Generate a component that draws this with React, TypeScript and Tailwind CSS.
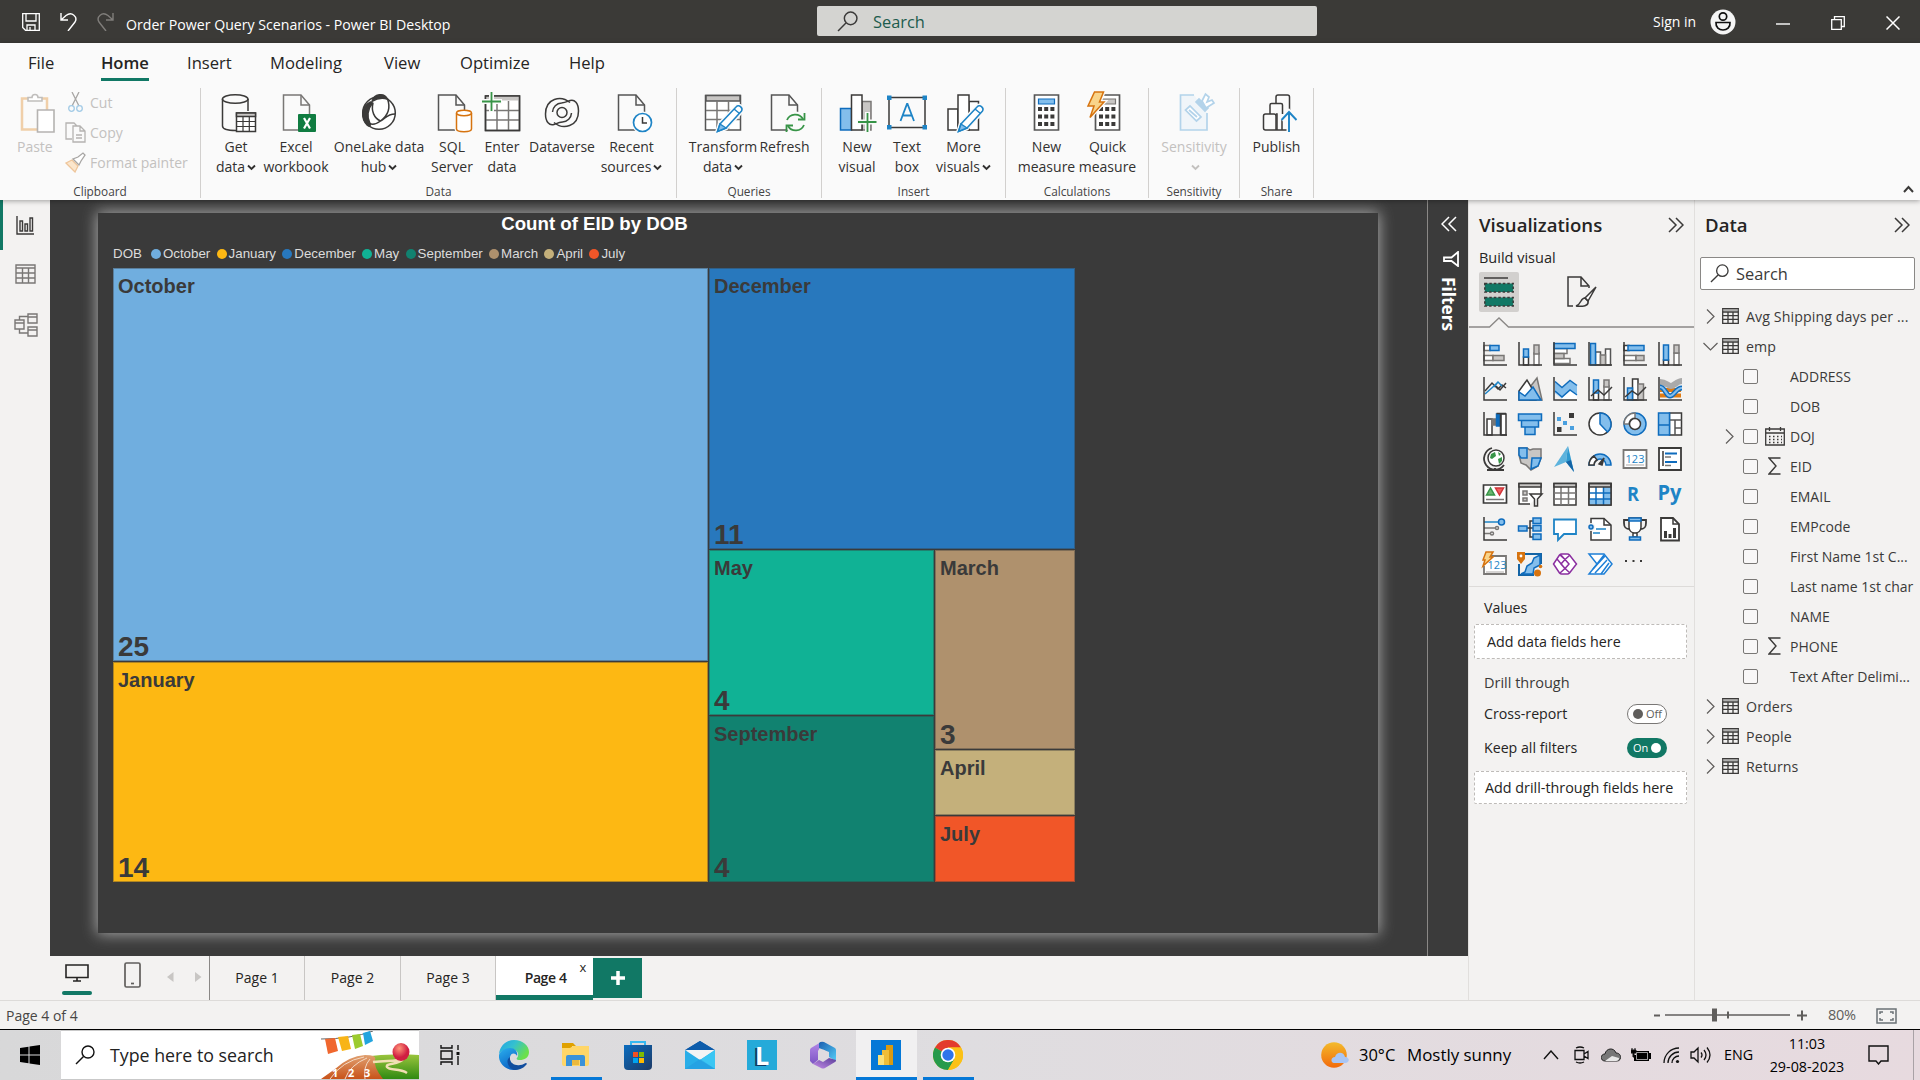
import React from "react";

type Kids = { children?: React.ReactNode };
const K = "#3b3a39";
const B = "#0f6cbd";
const L = "#83beec";
const G = "#797775";
const LG = "#c8c6c4";

/* ---------- ribbon icons (40x40) ---------- */
function RI({ children }: Kids) {
  return (
    <svg width="40" height="40" viewBox="0 0 40 40" fill="none" stroke={K} strokeWidth="1.5" className="block shrink-0 overflow-visible">
      {children}
    </svg>
  );
}
const Doc = ({ x = 6.5, c = "#555" }: { x?: number; c?: string }) => (
  <g transform={`translate(${x - 6.5} 0)`} stroke={c}>
    <path d="M6.5 2H24l8.5 10v25h-26z" fill="#fafafa" />
    <path d="M24 2v10h8.5" />
  </g>
);
const icGet = (
  <RI>
    <path d="M6.500 6v27c0 3 6 4.500 13.500 4.500M32 6v12" />
    <ellipse cx="19.200" cy="6" rx="12.800" ry="4.300" />
    <path d="M20.500 20h19v18.500h-19z" fill="#fff" />
    <path d="M20.500 20h19v3.500h-19z" fill={LG} />
    <path d="M20.500 28.500h19M20.500 33.500h19M27 23.500v15M33.300 23.500v15" strokeWidth="1.200" />
  </RI>
);
const icExcel = (
  <RI>
    <Doc x={7.5} c="#797775" />
    <rect x="22" y="21" width="18" height="18" rx="1" fill="#107c41" stroke="none" />
    <path d="M28 25l6 10.500M34 25l-6 10.500" stroke="#fff" strokeWidth="2.200" />
  </RI>
);
const icLake = (
  <RI>
    <circle cx="20" cy="20" r="16.300" fill="#fff" />
    <path d="M13 8.500C15 1 25-1 28.500 6c-5-1.500-11-.500-15.500 2.500z" fill={K} />
    <path d="M11.500 9C3 13 1 25 8.500 32.500c2 1.500 3.500 0 2.500-2C7.500 24 8.500 16 13.500 10z" fill={K} />
    <path d="M28.500 6c3 8 1 16-7 22-4 3-8 4-11 2.500M14 10c-2 8 1 15 7.500 18M21.500 28c5-2 6-7 14.500-7" />
  </RI>
);
const icSql = (
  <RI>
    <Doc />
    <path d="M24.500 20v16c0 3.500 15 3.500 15 0V20" fill="#fff" stroke="#fafafa" strokeWidth="4" />
    <path d="M24.500 20v16c0 3.500 15 3.500 15 0V20" fill="#fff" stroke="#d6730f" />
    <ellipse cx="32" cy="20" rx="7.500" ry="2.700" fill="#fff" stroke="#d6730f" />
  </RI>
);
const icEnter = (
  <RI>
    <path d="M3.500 3h34v34.500h-34z" fill="#fff" />
    <path d="M4 3h33v4.500H4z" fill={LG} stroke="none" />
    <path d="M3.500 17.500h34M3.500 27h34M15 8v29M26.500 8v29" stroke={G} />
    <path d="M3.500 3h34v34.500h-34z" />
    <path d="M-1 8.500h21M9.500-2v21" stroke="#fafafa" strokeWidth="5" />
    <path d="M0 8.500h19M9.500-1v19" stroke="#379447" strokeWidth="1.800" />
  </RI>
);
const swirl = "M28 9.500C19 2 3.500 5 3.500 21c0 8 4 12 8.500 10.500 3-1 4-2 8.500-2.500a9.500 9.500 0 0 0 9-9";
const icVerse = (
  <RI>
    <path d={swirl} />
    <path d={swirl} transform="rotate(180 20 19.500)" />
    <circle cx="20" cy="19.500" r="5" />
  </RI>
);
const icRecent = (
  <RI>
    <Doc />
    <circle cx="30.500" cy="29.500" r="11" fill="#fafafa" stroke="none" />
    <circle cx="30.500" cy="29.500" r="9" fill="#fff" stroke="#1e84c6" strokeWidth="1.700" />
    <path d="M30.500 24v6H35" />
  </RI>
);
const Pencil = () => (
  <g stroke="#1e84c6">
    <path d="M33.500 13.500c2-2.500 7 1.500 5 4.500L23 35l-8.500 3.500L17 31z" fill="#fff" stroke="#fafafa" strokeWidth="4.500" />
    <path d="M33.500 13.500c2-2.500 7 1.500 5 4.500L23 35l-8.500 3.500L17 31z" fill="#fff" />
    <path d="M17 31l6 4-8.500 3.500z" fill={L} />
    <path d="M31 16l5.500 4.500" />
  </g>
);
const icTransform = (
  <RI>
    <path d="M2.500 2.500h35v34.500h-35z" fill="#fff" stroke="#555" />
    <path d="M3 2.500h34V8H3z" fill={LG} stroke="#555" />
    <path d="M3 17.500h34M3 26.500h34M14 8v29M25.500 8v29" stroke={G} />
    <Pencil />
  </RI>
);
const icRefresh = (
  <RI>
    <Doc />
    <circle cx="30.500" cy="29.500" r="11" fill="#fafafa" stroke="none" />
    <g stroke="#379447" strokeWidth="1.800">
      <path d="M22 27a9 9 0 0 1 16-1M39 32a9 9 0 0 1-16 1" />
      <path d="M39.500 20v6.500H33M21.500 39v-6.500H28" />
    </g>
  </RI>
);
const icNewVisual = (
  <RI>
    <path d="M3.500 15.500h11V37h-11z" fill={L} stroke={B} />
    <path d="M25 8.500h9V37h-9z" fill={LG} stroke={G} />
    <path d="M14.500 2H25v35H14.500z" fill="#fff" />
    <path d="M20 29h21M30.500 19v21" stroke="#fafafa" strokeWidth="5" />
    <path d="M21 29h18.500M30.500 20v19" stroke="#379447" strokeWidth="1.800" />
  </RI>
);
const icText = (
  <RI>
    <path d="M2 4.500h36v30H2z" />
    <g fill="#1e84c6" stroke="none">
      <path d="M0 2.500h4.500V7H0zM35.500 2.500H40V7h-4.500zM0 32h4.500v4.500H0zM35.500 32H40v4.500h-4.500z" />
    </g>
    <path d="M13.500 28L20 11h.5L27 28M15.700 22.500h9" stroke="#1e84c6" strokeWidth="1.800" />
  </RI>
);
const icMore = (
  <RI>
    <path d="M4 16h10v21H4zM25 8.500h9.500V37H25z" fill="#fff" />
    <path d="M14 2h11v35H14z" fill="#fff" />
    <Pencil />
  </RI>
);
const CalcBody = ({ blue }: { blue?: boolean }) => (
  <g>
    <path d="M7.500 2h24v35h-24z" fill="#fff" stroke="#555" strokeWidth="1.700" />
    <path d="M11.500 6h16v5h-16z" fill={blue ? L : LG} stroke={blue ? B : G} strokeWidth="1.200" />
    <g fill={K} stroke="none">
      {[14, 21.5, 29].map((y) => [11, 17.2, 23.4].map((x) => <rect key={`${x}-${y}`} x={x} y={y} width="4" height="4" />))}
    </g>
  </g>
);
const icCalc = <RI><CalcBody blue /></RI>;
const icQuick = (
  <RI>
    <CalcBody />
    <path d="M6.500-1h9L11.500 9H16L2 24.500 6 13H0z" fill="#fafafa" stroke="#fafafa" strokeWidth="4" />
    <path d="M6.500-1h9L11.500 9H16L2 24.500 6 13H0z" fill="#f9d48a" stroke="#d6730f" />
  </RI>
);
const icSens = (
  <RI>
    <g stroke="#b3d3ea" strokeWidth="1.700">
      <path d="M20 2H6.500v35H33V20" fill="#f0f5f9" />
      <path d="M16 13l-4.500 4 11 11 4.500-4z" fill="#fff" />
      <path d="M15 17l8 7" />
      <path d="M22 9l9 9 3-3-9-9z" fill="#b3d3ea" />
      <path d="M28 8l3.500-7 3.500 3-2 5 5-2 2 3-8 5z" fill="#fff" />
    </g>
  </RI>
);
const icPublish = (
  <RI>
    <path d="M13 21v-9q0-1.500 1.500-1.500H24q1.500 0 1.500 1.500v9M19 10V4q0-2 2-2h9.500q2 0 2 2v13M25 37V27M19 37V23q0-2-2-2H8.500q-2 0-2 2v12q0 2 2 2H30" />
    <path d="M20 37V21h-1" />
    <path d="M32 39V19.500M24.500 27l7.500-8 7.500 8" stroke="#fafafa" strokeWidth="5" />
    <path d="M32 39V19.500M24.500 27l7.500-8 7.500 8" stroke="#1e84c6" strokeWidth="1.900" />
  </RI>
);

const Caret = () => (
  <svg width="9" height="7" viewBox="0 0 9 7" className="ml-[2px] inline-block overflow-visible" fill="none" stroke="currentColor" strokeWidth="1.900">
    <path d="M1 1.500l3.500 3.500L8 1.500" />
  </svg>
);

function Btn({ w, icon, a, b, caret, off }: { w: string; icon: React.ReactNode; a: string; b?: string; caret?: boolean; off?: boolean }) {
  return (
    <div className={`${w} flex shrink-0 flex-col items-center whitespace-nowrap pt-[5px] text-[14px] leading-[20px] ${off ? "text-[#c3c1bf]" : "text-[#323130]"}`}>
      {icon}
      <span className="mt-[4px]">{a}</span>
      <span className="flex h-[20px] items-center">
        {b}
        {caret && <Caret />}
      </span>
    </div>
  );
}
function Group({ w, name, children }: { w: string; name: string } & Kids) {
  return (
    <div className={`${w} flex h-[110px] shrink-0 flex-col border-r border-[#d2d0ce]`}>
      <div className="flex h-[94px] shrink-0 justify-center">{children}</div>
      <div className="shrink-0 text-center text-[11.800px] leading-[18px] text-[#444]">{name}</div>
    </div>
  );
}

/* ---------- visual gallery icons (24x24) ---------- */
const Axis = () => <path d="M1 0v23h23" stroke={K} fill="none" />;
const V = ({ children }: Kids) => (
  <svg width="24" height="24" viewBox="0 0 24 24" fill="none" stroke={K} strokeWidth="1.500" className="block overflow-visible">
    {children}
  </svg>
);
const gallery: React.ReactNode[] = [
  <><path d="M1 3.500h6v5H1z" fill="#fff" stroke={G} /><path d="M7 3.500h9v5H7z" fill={L} stroke={B} /><path d="M1 13.500h9v5H1z" fill="#fff" stroke={G} /><path d="M10 13.500h11v5H10z" fill={LG} stroke={G} /><Axis /></>,
  <><path d="M5.500 15h5v8h-5z" fill="#fff" /><path d="M5.500 7h5v8h-5z" fill={L} stroke={B} /><path d="M16 11h5v12h-5z" fill="#fff" stroke={G} /><path d="M16 3h5v9h-5z" fill={LG} stroke={G} /><Axis /></>,
  <><path d="M1 6.500h13v5H1zM1 16.500h16v5H1z" fill="#fff" stroke={G} /><path d="M1 11.500h10v5H1z" fill={LG} stroke={G} /><path d="M1 1.500h21v5H1z" fill={L} stroke={B} /><Axis /></>,
  <><path d="M7.500 10h5v13h-5zM17.500 7h5v16h-5z" fill="#fff" stroke="#555" /><path d="M12.500 13h5v10h-5z" fill={LG} stroke={G} /><path d="M2.500 1.500h5V23h-5z" fill={L} stroke={B} /><Axis /></>,
  <><path d="M1 3.500h5v5H1z" fill="#fff" /><path d="M5 3.500h16v5H5z" fill={L} stroke={B} /><path d="M1 13.500h12v5H1z" fill="#fff" stroke={G} /><path d="M13 13.500h8v5h-8z" fill={LG} stroke={G} /><Axis /></>,
  <><path d="M5.500 18h5v5h-5z" fill="#fff" /><path d="M5.500 3h5v15h-5z" fill={L} stroke={B} /><path d="M16 11h5v12h-5z" fill="#fff" stroke={G} /><path d="M16 3h5v8h-5z" fill={LG} stroke={G} /><Axis /></>,
  <><path d="M2 14l7-8 6 6 4-4 4 3" /><path d="M2 17L11 9l4-4 4 4M15 5l-4 5" stroke="#1e84c6" /><path d="M13 9l4 4 6-7" /><Axis /></>,
  <><path d="M12 23V10l7-9 5 22z" fill={LG} stroke={G} /><path d="M1 23V14L9 3l9 15v5z" fill="#fff" /><path d="M1 23v-8l6 4 8-9 8 13z" fill={L} stroke={B} /></>,
  <><path d="M2 5l7 6 8-7 7 5v13l-8-6-7 6-7-6z" fill={L} stroke="none" /><path d="M2 15l7 7h15v-4l-7-5-8 8z" fill="#fff" stroke="none" /><path d="M2 4.500l7 6 8-7 7 5M2 14l7 6 8-7 7 5" stroke={B} /><Axis /></>,
  <><path d="M5.500 14h5v9h-5z" fill="#fff" /><path d="M5.500 3h5v13h-5z" fill={L} stroke={B} /><path d="M16 9h5v14h-5z" fill="#fff" stroke={G} /><path d="M16 3h5v7h-5z" fill={LG} stroke={G} /><path d="M3 19l7-6 6 5 8-8" /><Axis /></>,
  <><path d="M9.500 2h5.500v21H9.500z" fill="#fff" /><path d="M15 7h5.500v16H15z" fill={LG} stroke={G} /><path d="M4.500 11h5v12h-5z" fill={L} stroke={B} /><path d="M2 20l7-6 6 4 8-8" /><Axis /></>,
  <><path d="M2 18.500h21M2 13h21" stroke="#e07b12" strokeWidth="4" /><path d="M2 5c6 0 8 4 11 4s6-5 11-5" stroke="#aaa" strokeWidth="6" /><path d="M2 10c5 0 6 9 10 9s6-8 12-8" stroke={B} strokeWidth="5" /><path d="M2 10c5 0 6 9 10 9s6-8 12-8" stroke={L} strokeWidth="2.200" /><Axis /></>,
  <><path d="M4 7h5v16H4zM18 2h5v21h-5z" fill="#fff" /><path d="M9 7h4.500v6H9z" fill={G} stroke={G} /><path d="M13.500 2H17v12h-3.500z" fill={B} stroke={B} /><path d="M13.500 1.500H23M17.500 2v21" /><Axis /></>,
  <g fill={L} stroke={B}><path d="M.5 2h23v6.500H.5zM3.500 8.500h17V15h-17zM7 15h10v7.500H7z" /></g>,
  <><g stroke="none"><path d="M16 1h5v5h-5zM4 15h4.500v5H4z" fill={K} /><path d="M4 5h4v4H4zM10 9h4v4h-4zM17 14h4v4h-4z" fill="#4aa0df" /></g><Axis /></>,
  <><circle cx="12" cy="12" r="11" fill="#fff" /><path d="M12 1v11l7.500 8A11 11 0 0 0 12 1z" fill={L} stroke={B} /></>,
  <><circle cx="12" cy="12" r="11" fill={L} stroke={B} /><path d="M1 12A11 11 0 0 1 12 1v5a6 6 0 0 0-6 6z" fill="#fff" stroke={G} /><circle cx="12" cy="12" r="5.500" fill="#fff" /></>,
  <><path d="M11.500 1h12v22h-12z" fill="#fff" /><path d="M11.500 8h12M17 8v15M17 16h6.500" stroke="#555" /><path d="M.5 1h11v12H.5zM.5 13h11v10H.5z" fill={L} stroke={B} /></>,
  <><circle cx="13" cy="11" r="8" fill="#fff" /><path d="M8 7l4-2 1 4-4 3-2-1zM15 12l4-2v4l-3 3zM15 5l3 2-2 2z" fill="#379447" stroke="none" /><path d="M9 1a11 11 0 1 0 12 17M12 21v2M4 23h17" strokeWidth="1.800" /></>,
  <><path d="M1 1h8l3 2 3-1h8v9l-3 8-7 4-5-5-5-2-2-8z" fill={LG} stroke={G} /><path d="M1 1h8v10H3l-2-3zM14 11h9l-3 8-7 3z" fill={L} stroke={B} /></>,
  <g stroke="none"><path d="M15-1L1 20l12-5z" fill="#5db3dd" /><path d="M15-1l6 26-8-10z" fill="#2f9ad0" /><path d="M13 15l8 10-3-12z" fill="#1464a5" /></g>,
  <><path d="M1 18a11 11 0 0 1 22 0h-5a6 6 0 0 0-12 0z" fill={L} stroke={B} /><path d="M1 18a11 11 0 0 1 5-9l3 4a6 6 0 0 0-3 5z" fill="#fff" /><path d="M11 17l5-6-2 7z" fill={K} /></>,
  <><path d="M.5 3h23v18H.5z" fill="#fff" stroke={G} strokeWidth="1.800" /><text x="12" y="15.500" fontSize="11" textAnchor="middle" fill="#1e84c6" stroke="none" fontFamily="Open Sans">123</text><path d="M3 18h18" stroke={LG} /></>,
  <><path d="M1 1h22v22H1z" fill="#fff" strokeWidth="1.800" /><path d="M5 4v15" /><path d="M7 6.500h12M7 15h12" stroke={B} strokeWidth="2" /><path d="M7 10h6M7 18.500h6" stroke={G} /></>,
  <><path d="M.5 3h23v18H.5z" fill="#fff" strokeWidth="1.700" /><path d="M3.500 13l4-7 4 7z" fill="#6bb56f" stroke="#379447" /><path d="M12.500 6h8l-4 7z" fill="#f06060" stroke="#d13438" /><path d="M3 17.500h18" stroke={G} /></>,
  <><path d="M12 22H1V1.500h22V12" fill="#fff" /><path d="M1 1.500h22v3.500H1z" fill={LG} /><path d="M5 9h4v4H5zM5 16h4v3H5z" fill={LG} stroke={G} /><path d="M12 12h12l-4.500 5v7h-3v-7z" fill="#fff" /></>,
  <><path d="M1 1.500h22v21.500H1z" fill="#fff" /><path d="M1 11h22M1 17h22M8 5v18M15.500 5v18" stroke={G} /><path d="M1 1.500h22V5H1z" fill={LG} /></>,
  <><path d="M1 1.500h22v21.500H1z" fill="#fff" /><path d="M15.500 5H23v18H1v-6h14.500z" fill={L} stroke="none" /><path d="M1 11h22M1 17h22M8 5v18M15.500 5v18" stroke={B} /><path d="M1 1.500h22V5H1z" fill={LG} /><path d="M1 1.500h22v21.500H1z" /></>,
  <text x="4" y="19" fontSize="20" fontWeight="700" fill="#1e84c6" stroke="none" fontFamily="Open Sans" textLength="12" lengthAdjust="spacingAndGlyphs">R</text>,
  <text x="-.5" y="17.500" fontSize="21" fontWeight="700" fill="#1e84c6" stroke="none" fontFamily="Open Sans" textLength="24" lengthAdjust="spacingAndGlyphs">Py</text>,
  <><path d="M1 5h15" stroke="#1e84c6" /><circle cx="18.500" cy="5" r="3" fill={L} stroke={B} /><path d="M1 11h12M1 16.500h7" stroke={G} /><circle cx="14" cy="11" r="1.500" fill="#fff" stroke={G} /><circle cx="9" cy="16.500" r="1.500" fill="#fff" stroke={G} /><Axis /></>,
  <><path d="M9 11h3M12 11V4h3M12 11v9h3M12 11h3" /><g fill={L} stroke={B}><path d="M.5 9H9v5H.5zM15 1h8v5.500h-8zM15 8.500h8V14h-8zM15 17h8v5.500h-8z" /></g></>,
  <path d="M1 2.500h22V17H11l-6 6v-6H1z" fill="#fff" stroke="#1e84c6" strokeWidth="1.800" />,
  <><path d="M3 1.500h13l7 6.500v15H3z" fill="#fff" /><path d="M16 1.500V8h7" /><circle cx="3" cy="10" r="4" fill="#f3f2f1" stroke="none" /><circle cx="3" cy="10" r="2" fill={L} stroke={B} /><path d="M8 12h10M5 16h7" stroke="#1e84c6" /></>,
  <><path d="M6 3H1v3c0 5 2 6 6 6M18 3h5v3c0 5-2 6-6 6" strokeWidth="1.800" /><path d="M6 1h12v9c0 4-3 6-6 6s-6-2-6-6zM10 16h4v4h-4z" fill="#fff" /><path d="M6 1h12v3H6zM6.500 20h11v3h-11z" fill={L} stroke={B} /></>,
  <><path d="M3 1h12l6 6v16.500H3z" fill="#fff" strokeWidth="1.800" /><path d="M15 1v6h6" /><path d="M6 14h3v7H6zM10.500 17h3v4h-3zM15 11h3v10h-3z" fill={K} stroke="none" /></>,
  <><path d="M2 4h21v18H1V14" fill="#fff" stroke={G} strokeWidth="1.800" /><text x="14" y="17" fontSize="11" textAnchor="middle" fill="#1e84c6" stroke="none" fontFamily="Open Sans">123</text><path d="M3 20h18" stroke={LG} /><path d="M3 0h7L7 5h3L0 14l2-6h-2z" fill="#f9d48a" stroke="#d6730f" /></>,
  <><path d="M6 2h17v10M1 12v11h15" stroke="#1464a5" strokeWidth="2" /><path d="M3 22h12l1-6 6-3V3l-6 3-2 5-5 3-2 6z" fill={L} stroke={B} /><path d="M-1 0h8v7l-4 5-4-5z" fill="#d6730f" stroke="none" /><circle cx="3" cy="4" r="1.400" fill="#fff" stroke="none" /><circle cx="19.500" cy="21" r="3.500" fill="#d6730f" stroke="none" /><circle cx="22.500" cy="14.500" r="1.800" fill="#d6730f" stroke="none" /></>,
  <g stroke="#8b2fa0" fill="#fff" strokeWidth="1.500"><path d="M8.500 2h6q1 0 2 1l7 9-7 9q-1 1-2 1h-6q-1 0-2-1l-6-9 6-9q1-1 2-1z" /><path d="M7 3l5 4.500 5-4.500M7 21l5-4.500 5 4.500M12 7.500L8 12l4 4.500 4-4.500zM7.500 2.500L12 7.500M12 16.500L4 7" fill="none" /></g>,
  <g stroke="#1e7fd6" fill="#fff"><path d="M1 2h15l8 10-8 10H1l8-10z" /><path d="M9 12L16 3M5 17L17 4M7 21l12-13M13 22l8-11" fill="none" /></g>,
  <g fill={K} stroke="none"><path d="M2 8h2v2H2zM9.500 8h2v2h-2zM17 8h2v2h-2z" /></g>,
];

/* ---------- small shared icons ---------- */
const DblChevron = ({ flip, c = K }: { flip?: boolean; c?: string }) => (
  <svg width="16" height="16" viewBox="0 0 16 16" fill="none" stroke={c} strokeWidth="1.500" className={flip ? "ml-[2px] block -scale-x-100" : "block"}>
    <path d="M1 1l7 7-7 7M8 1l7 7-7 7" />
  </svg>
);
const Mag = ({ s, c = K }: { s: number; c?: string }) => (
  <svg width={s} height={s} viewBox="0 0 20 20" fill="none" stroke={c} strokeWidth="1.400">
    <circle cx="13" cy="7" r="6" />
    <path d="M8.500 11.500L1 19" />
  </svg>
);
const TableIco = () => (
  <svg width="17" height="16" viewBox="0 0 17 16" fill="none" stroke={K} strokeWidth="1.300" className="shrink-0">
    <path d="M.7.700h15.600v14.600H.7zM.7 4h15.600M.7 7.700h15.600M.7 11.400h15.600M6 4v11.300M11 4v11.300" />
    <path d="M.7 2h15.600" stroke="#888" />
  </svg>
);

const fields: { n: string; k?: "date" | "sum" }[] = [
  { n: "ADDRESS" }, { n: "DOB" }, { n: "DOJ", k: "date" }, { n: "EID", k: "sum" }, { n: "EMAIL" }, { n: "EMPcode" },
  { n: "First Name 1st C..." }, { n: "Last name 1st char" }, { n: "NAME" }, { n: "PHONE", k: "sum" }, { n: "Text After Delimi..." },
];
const RightCh = () => (
  <svg width="9" height="15" viewBox="0 0 9 15" fill="none" stroke="#605e5c" strokeWidth="1.200" className="shrink-0"><path d="M1 .5l7 7-7 7" /></svg>
);
function TableRow({ n, open }: { n: string; open?: boolean }) {
  return (
    <div className="flex h-[30px] items-center whitespace-nowrap">
      <div className="flex w-[27px] justify-center pl-[3px]">
        {open ? <svg width="15" height="9" viewBox="0 0 15 9" fill="none" stroke="#605e5c" strokeWidth="1.200"><path d="M.5 1l7 7 7-7" /></svg> : <RightCh />}
      </div>
      <TableIco />
      <span className="ml-[7px] pt-px text-[14.200px] tracking-[0.1px]">{n}</span>
    </div>
  );
}

const legend: [string, string][] = [
  ["October", "bg-[#70aedf]"], ["January", "bg-[#fdb813]"], ["December", "bg-[#2878bd]"], ["May", "bg-[#10b295]"],
  ["September", "bg-[#118270]"], ["March", "bg-[#af916d]"], ["April", "bg-[#c4b07b]"], ["July", "bg-[#f15628]"],
];
function Tile({ c, n, v }: { c: string; n: string; v?: number }) {
  return (
    <div className={`${c} flex min-h-0 flex-col justify-between border border-[#3a3a3a]/40 pl-[4px]`}>
      <span className="pt-[5px] text-[20px] leading-[24px]">{n}</span>
      {v !== undefined && <span className="text-[28px] leading-[26px]">{v}</span>}
    </div>
  );
}

/* ---------- taskbar logos (30x30) ---------- */
const S30 = ({ children }: Kids) => <svg width="30" height="30" viewBox="0 0 30 30" className="block">{children}</svg>;
const Edge = (
  <S30>
    <defs>
      <linearGradient id="e1" x1="0" y1="0" x2="1" y2=".5"><stop offset="0" stopColor="#1fa3e6" /><stop offset=".5" stopColor="#35c1cf" /><stop offset="1" stopColor="#6be04a" /></linearGradient>
      <linearGradient id="e2" x1="0" y1="0" x2=".5" y2="1"><stop offset="0" stopColor="#2bb0ee" /><stop offset="1" stopColor="#0a62c4" /></linearGradient>
    </defs>
    <path d="M0 14C1 5 8 0 15 0c9 0 15 6 15 12 0 6-5 8-9 8-3 0-4-1-3-2 3-4 0-9-6-9-6 0-10 2-12 5z" fill="url(#e1)" />
    <path d="M0 15C1 11 6 8 11 8c6 0 8 5 7 8-1-3-6-4-7 1-1 6 4 11 9 12-11 4-21-5-20-14z" fill="url(#e2)" />
    <path d="M11 17c-1 6 5 9 10 8 3 0 5-2 6-2 1 0 1 1 0 2-3 4-8 5-12 5-6-2-9-10-4-13z" fill="#104d9e" />
  </S30>
);
const Folder = (
  <S30>
    <path d="M2 3h11l3 3h-4v3H2z" fill="#e0a100" /><path d="M2 8h8l3-2h16v18q0 2-2 2H4q-2 0-2-2z" fill="#ffd668" />
    <path d="M6 26V17q0-2 2-2h15q2 0 2 2v9h-5v-6h-8v6z" fill="#3b92d9" /><path d="M12 20h7v5h-7z" fill="#ecb93d" />
  </S30>
);
const Store = (
  <S30>
    <defs><linearGradient id="s1" x1="0" y1="0" x2="1" y2="1"><stop offset="0" stopColor="#0a6cbf" /><stop offset="1" stopColor="#1d3a66" /></linearGradient></defs>
    <path d="M8 6V2h14v4" fill="none" stroke="#35b9f1" strokeWidth="2" /><path d="M1 5h28v21q0 4-4 4H5q-4 0-4-4z" fill="url(#s1)" />
    <path d="M10 12h5v5h-5z" fill="#f25022" /><path d="M16 12h5v5h-5z" fill="#7fba00" /><path d="M10 18h5v5h-5z" fill="#00a4ef" /><path d="M16 18h5v5h-5z" fill="#ffb900" />
  </S30>
);
const Mail = (
  <S30>
    <path d="M0 10L15 1l15 9z" fill="#0f5ba7" /><path d="M2 10h26v10H2z" fill="#f4f4f4" /><path d="M2 9l13-8 13 8v1H2z" fill="#0d5cab" />
    <path d="M0 10l15 10L30 10v19H0z" fill="#29aee8" /><path d="M30 10v19L15 20z" fill="#3bc6f3" /><path d="M0 29h30L15 19z" fill="#2196dd" opacity=".5" />
  </S30>
);
const LApp = (
  <div className="flex h-[30px] w-[30px] items-center justify-center bg-[#25aad9] text-[25px] font-bold leading-none text-white [text-shadow:-2px_1px_0_#123a63]">L</div>
);
const M365 = (
  <S30>
    <defs><linearGradient id="m1" x1="0" y1="0" x2="0" y2="1"><stop offset="0" stopColor="#b388e8" /><stop offset="1" stopColor="#7d55c4" /></linearGradient>
      <linearGradient id="m2" x1="0" y1="0" x2="1" y2="1"><stop offset="0" stopColor="#1b5fb0" /><stop offset="1" stopColor="#54cdf7" /></linearGradient>
      <linearGradient id="m3" x1="0" y1="1" x2="1" y2="0"><stop offset="0" stopColor="#c48be8" /><stop offset="1" stopColor="#5b3f9a" /></linearGradient></defs>
    <path d="M13 2L3 8q-1 1-1 2v11l3 3 5-4v-9l5-9z" fill="url(#m1)" />
    <path d="M11 3q2-2 5-1l11 6q1 1 1 2v11l-7-4v-5l-10-4z" fill="url(#m2)" />
    <path d="M28 20q0 2-1 2l-10 6q-2 1-4 0l-8-4 6-4 4 2 6-4z" fill="url(#m3)" />
    <path d="M15 9.500l5 3v5.500L15 21l-5-3v-5.500z" fill="#dfdce0" />
  </S30>
);
const PBI = (
  <S30>
    <path d="M0 0h30v30H0z" fill="#0578d7" /><path d="M15 5h7v20h-7z" fill="#d99a12" /><path d="M11 10h7v15h-7z" fill="#f0bd38" /><path d="M7 15h6v10H7z" fill="#fbe07a" />
  </S30>
);
const Chrome = (
  <S30>
    <circle cx="15" cy="15" r="15" fill="#fbc116" /><path d="M15 15L2 7.500A15 15 0 0 1 28 7.500H15z" fill="#e33b2e" /><path d="M2 7.500A15 15 0 0 0 15 30l6.500-11.300L15 15z" fill="#269a4b" />
    <path d="M15 7.500h13A15 15 0 0 1 15 30l6.500-11z" fill="#fbc116" /><circle cx="15" cy="15" r="7.300" fill="#fff" /><circle cx="15" cy="15" r="5.700" fill="#2f74ea" />
  </S30>
);
function Task({ w, children, on, line }: { w: string; on?: boolean; line?: boolean } & Kids) {
  return (
    <div className={`${w} flex h-[50px] shrink-0 flex-col items-center justify-between ${on ? "bg-[#f1f0f1]" : ""}`}>
      <div className="pt-[10px]">{children}</div>
      <div className={`h-[3px] ${line ? "w-full bg-[#0578d7]" : ""}`} />
    </div>
  );
}

export default function App() {
  return (
    <div className="flex h-[1080px] w-[1920px] flex-col overflow-hidden bg-[#f3f2f1] font-['Open_Sans','Noto_Sans',sans-serif] text-[#252423]">
      {/* title bar */}
      <header className="flex h-[43px] shrink-0 bg-[#3b3a37] text-[14px] text-white">
        <div className="flex w-[817px] items-center pl-[22px] pt-[2px]">
          <svg width="18" height="18" viewBox="0 0 18 18" fill="none" stroke="#fff" strokeWidth="1.300" className="mb-[2px]"><path d="M.7.700h16.600v16.600H3.500L.7 14.500zM4 1v7h10V1M5 17v-5h8v5M8 14v3" /></svg>
          <svg width="17" height="18" viewBox="0 0 17 18" fill="none" stroke="#fff" strokeWidth="1.400" className="mb-[2px] ml-[20px]"><path d="M1 0v7h7M1 7l5-4.500C12-2 18 4 15 9L8 18" /></svg>
          <svg width="17" height="18" viewBox="0 0 17 18" fill="none" stroke="#807e7b" strokeWidth="1.400" className="mb-[2px] ml-[20px]"><path d="M16 0v7H9M16 7l-5-4.500C5-2-1 4 2 9l7 9" /></svg>
          <span className="ml-[12px] whitespace-nowrap pt-[5px] text-[14.150px]">Order Power Query Scenarios - Power BI Desktop</span>
        </div>
        <div className="mt-[6px] flex h-[30px] w-[500px] items-center rounded-[2px] bg-[#d4d4d1] pl-[20px] text-[16.400px] text-[#1d5c4d]">
          <Mag s={21} /><span className="ml-[15px] pt-[2px]">Search</span>
        </div>
        <div className="flex flex-1 items-center pl-[336px]">
          <span className="w-[57px] whitespace-nowrap">Sign in</span>
          <svg width="26" height="26" viewBox="0 0 26 26" fill="none" stroke="#111" strokeWidth="1.700"><circle cx="13" cy="13" r="12.500" fill="#f5f5f5" stroke="none" /><circle cx="13" cy="7.500" r="3.700" /><path d="M6 13.500h14c1 10-15 10-14 0z" /></svg>
          <svg width="14" height="14" viewBox="0 0 14 14" stroke="#fff" strokeWidth="1.400" className="ml-[40px]"><path d="M0 9h14" /></svg>
          <svg width="14" height="14" viewBox="0 0 14 14" fill="none" stroke="#fff" strokeWidth="1.300" className="ml-[41px] mt-[2px]"><path d="M.7 3.700h9.600v9.600H.7zM3.500 3.500V.7h9.800v9.800h-3" /></svg>
          <svg width="14" height="14" viewBox="0 0 14 14" stroke="#fff" strokeWidth="1.500" className="ml-[41px] mt-[3px]"><path d="M.5.500l13 13M13.500.500l-13 13" /></svg>
        </div>
      </header>

      {/* ribbon */}
      <section className="z-10 flex h-[157px] shrink-0 flex-col bg-[#fafafa] shadow-[0_1px_5px_rgba(0,0,0,.35)]">
        <nav className="flex h-[45px] text-[16.600px] text-[#252423]">
          <div className="ml-[28px] w-[73px] pt-[8px]">File</div>
          <div className="flex w-[48px] flex-col pt-[8px] font-semibold"><span className="tracking-[-0.1px]">Home</span><i className="mt-[2px] h-[3px] bg-[#117865]" /></div>
          <div className="ml-[38px] w-[83px] pt-[8px]">Insert</div>
          <div className="w-[114px] pt-[8px]">Modeling</div>
          <div className="w-[76px] pt-[8px]">View</div>
          <div className="w-[109px] pt-[8px]">Optimize</div>
          <div className="pt-[8px]">Help</div>
        </nav>
        <div className="flex">
          <Group w="w-[201px]" name="Clipboard">
            <div className="flex w-[201px] text-[14px] text-[#c3c1bf]">
              <div className="flex w-[50px] shrink-0 flex-col pl-[17px] pt-[5px]">
                <svg width="40" height="40" viewBox="0 0 40 40" fill="none" strokeWidth="1.600" className="overflow-visible">
                  <path d="M5 5.500h25v31H5z" fill="#fafafa" stroke="#f0cfa9" strokeWidth="2.500" />
                  <path d="M11 8V4.500h4c0-4 6-4 6 0h4V8z" fill="#fff" stroke="#c0bebc" />
                  <path d="M20.500 17H37v22H20.500z" fill="#fff" stroke="#b5b3b1" />
                </svg>
                <span className="mt-[4px] leading-[20px]">Paste</span>
              </div>
              <div className="-mt-px flex flex-col pl-[15px]">
                <div className="flex h-[30px] items-center gap-[4px]">
                  <svg width="21" height="21" viewBox="0 0 21 21" fill="none" stroke="#a8a6a4" strokeWidth="1.300"><path d="M7 0l7 14M14 0L7 14" /><g stroke="#a3cbe6"><circle cx="6.500" cy="16.500" r="2.800" /><circle cx="14.500" cy="16.500" r="2.800" /></g></svg>
                  Cut
                </div>
                <div className="flex h-[30px] items-center gap-[4px]">
                  <svg width="21" height="21" viewBox="0 0 21 21" fill="none" stroke="#b5b3b1" strokeWidth="1.300"><path d="M7 17H1V1h8l3 3M8 4h7l5 5v11H8zM15 4v5h5M11 13h6M11 16h6" /></svg>
                  Copy
                </div>
                <div className="flex h-[30px] items-center gap-[4px] whitespace-nowrap">
                  <svg width="21" height="21" viewBox="0 0 21 21" fill="none" strokeWidth="1.300"><path d="M1 11l6-3 6 6-3 6z" fill="#fbe6cc" stroke="#eec59a" /><path d="M8 7l6 6 2-4 4-6-2-2-5 4z" fill="#fff" stroke="#a8a6a4" /></svg>
                  Format painter
                </div>
              </div>
            </div>
          </Group>
          <Group w="w-[476px]" name="Data">
            <Btn w="w-[56px]" icon={icGet} a="Get" b="data" caret />
            <Btn w="w-[64px]" icon={icExcel} a="Excel" b="workbook" />
            <Btn w="w-[102px]" icon={icLake} a="OneLake data" b="hub" caret />
            <Btn w="w-[44px]" icon={icSql} a="SQL" b="Server" />
            <Btn w="w-[56px]" icon={icEnter} a="Enter" b="data" />
            <Btn w="w-[64px]" icon={icVerse} a="Dataverse" />
            <Btn w="w-[75px]" icon={icRecent} a="Recent" b="sources" caret />
          </Group>
          <Group w="w-[145px]" name="Queries">
            <div className="ml-[6px] flex">
              <Btn w="w-[65px]" icon={icTransform} a="Transform" b="data" caret />
              <Btn w="w-[58px]" icon={icRefresh} a="Refresh" />
            </div>
          </Group>
          <Group w="w-[184px]" name="Insert">
            <Btn w="w-[50px]" icon={icNewVisual} a="New" b="visual" />
            <Btn w="w-[50px]" icon={icText} a="Text" b="box" />
            <Btn w="w-[63px]" icon={icMore} a="More" b="visuals" caret />
          </Group>
          <Group w="w-[143px]" name="Calculations">
            <div className="-ml-px flex">
              <Btn w="w-[62px]" icon={icCalc} a="New" b="measure" />
              <Btn w="w-[60px]" icon={icQuick} a="Quick" b="measure" />
            </div>
          </Group>
          <Group w="w-[91px]" name="Sensitivity"><Btn w="w-[88px]" icon={icSens} a="Sensitivity" caret off /></Group>
          <Group w="w-[74px]" name="Share"><Btn w="w-[72px]" icon={icPublish} a="Publish" /></Group>
          <div className="flex flex-1 items-end justify-end pb-[5px] pr-[6px]">
            <svg width="11" height="8" viewBox="0 0 11 8" fill="none" stroke={K} strokeWidth="2"><path d="M1 7l4.500-5L10 7" /></svg>
          </div>
        </div>
      </section>

      <main className="flex h-[800px] shrink-0">
        <div className="flex w-[1468px] flex-col">
          <div className="flex h-[756px]">
            {/* view switcher */}
            <aside className="flex w-[50px] flex-col">
              <div className="flex h-[50px] items-center border-l-[3px] border-[#117865] pl-[13px]">
                <svg width="18" height="19" viewBox="0 0 18 19" fill="none" stroke={K} strokeWidth="1.400"><path d="M1 0v18h17M4 5h2.500v10H4zM9 8h2.500v7H9zM14 2h2.500v13H14z" /></svg>
              </div>
              <div className="flex h-[50px] items-center pb-[2px] pl-[15px]">
                <svg width="21" height="20" viewBox="0 0 21 20" fill="none" stroke={G} strokeWidth="1.400"><path d="M1 1h19v18H1zM1 4h19M1 9h19M1 14h19M7.500 4v15M13.500 4v15" /></svg>
              </div>
              <div className="flex h-[50px] items-center pb-px pl-[14px]">
                <svg width="24" height="24" viewBox="0 0 24 24" fill="none" stroke={G} strokeWidth="1.400"><path d="M1 7h9v9H1zM14 1h9v9h-9zM14 14h9v9h-9zM1 10h9M14 4h9M14 17h9M5.500 7V3.500H14M5.500 16v4H14" /></svg>
              </div>
            </aside>
            {/* report canvas */}
            <div className="w-[1377px] bg-[#3b3b3b] pl-[48px] pt-[13px]">
              <div className="h-[720px] w-[1280px] bg-[#3a3a3a] pl-[15px] font-['Liberation_Sans',Arial,sans-serif] shadow-[0_0_14px_1px_#a8a8a8]">
                <div className="flex h-[28px] w-[963px] justify-center text-[18.670px] font-bold leading-[21px] text-white">Count of EID by DOB</div>
                <div className="flex h-[27px] items-center pb-px text-[13.330px] text-[#dcdcdc]">
                  <span className="mr-[9px]">DOB</span>
                  {legend.map(([n, c]) => (
                    <span key={n} className="mr-[6.300px] flex items-center"><i className={`${c} mr-[2px] h-[10px] w-[10px] rounded-full`} />{n}</span>
                  ))}
                </div>
                <div className="grid h-[614px] w-[962px] grid-cols-[595px_366px] gap-px font-bold text-[#3a3a3a]">
                  <div className="grid grid-rows-[393px_220px] gap-px">
                    <Tile c="bg-[#70aedf]" n="October" v={25} />
                    <Tile c="bg-[#fdb813]" n="January" v={14} />
                  </div>
                  <div className="grid grid-rows-[281px_332px] gap-px">
                    <Tile c="bg-[#2878bd]" n="December" v={11} />
                    <div className="grid grid-cols-[225px_140px] gap-px">
                      <div className="grid grid-rows-[165px_166px] gap-px">
                        <Tile c="bg-[#10b295]" n="May" v={4} />
                        <Tile c="bg-[#118270]" n="September" v={4} />
                      </div>
                      <div className="grid grid-rows-[199px_65px_66px] gap-px">
                        <Tile c="bg-[#af916d]" n="March" v={3} />
                        <Tile c="bg-[#c4b07b]" n="April" />
                        <Tile c="bg-[#f15628]" n="July" />
                      </div>
                    </div>
                  </div>
                </div>
              </div>
            </div>
            {/* collapsed filters pane */}
            <div className="z-[1] flex w-[41px] flex-col items-center border-l border-[#8a8886] bg-[#3b3b3b] pt-[16px]">
              <DblChevron flip c="#fff" />
              <svg width="16" height="16" viewBox="0 0 16 16" fill="none" stroke="#fff" strokeWidth="1.800" className="ml-[6px] mt-[19px]"><path d="M15 1v14L8.500 10H1V6.500h7.500z" /></svg>
              <span className="-ml-px mt-[10px] text-[17.300px] font-bold leading-[18px] text-white [writing-mode:vertical-rl]">Filters</span>
            </div>
          </div>
          {/* page tabs */}
          <div className="flex h-[44px] text-[14px]">
            <div className="ml-[62px] flex w-[30px] flex-col items-center pt-[8px]">
              <svg width="24" height="18" viewBox="0 0 24 18" fill="none" stroke="#252423" strokeWidth="1.600"><path d="M1 1h22v12.500H1zM12 13.500V17M8 17h8" /></svg>
              <i className="mt-[9px] h-[4px] w-[30px] rounded-full bg-[#117865]" />
            </div>
            <svg width="17" height="26" viewBox="0 0 17 26" fill="none" stroke="#605e5c" strokeWidth="1.700" className="ml-[32px] mt-[6px]"><rect x="1" y="1" width="15" height="24" rx="1.500" /><path d="M7 21.500h3" /></svg>
            <div className="flex w-[68px] items-center justify-between pb-[2px] pl-[26px] pr-[7px]">
              <svg width="7" height="10" viewBox="0 0 7 10" fill="#c8c6c4"><path d="M6.500 0v10L0 5z" /></svg>
              <svg width="7" height="10" viewBox="0 0 7 10" fill="#c8c6c4"><path d="M0 0v10l6.500-5z" /></svg>
            </div>
            <div className="flex w-[96px] items-center justify-center border-x border-x-[#c8c6c4] border-l-[#8a8886] pb-[2px]">Page 1</div>
            <div className="flex w-[96px] items-center justify-center border-r border-[#c8c6c4] pb-[2px]">Page 2</div>
            <div className="flex w-[95px] items-center justify-center border-r border-[#c8c6c4] pb-[2px]">Page 3</div>
            <div className="flex w-[97px] justify-center border-b-[5px] border-[#117865] bg-white pl-[22px] font-semibold">
              <span className="whitespace-nowrap pt-[11px] tracking-[-0.4px]">Page 4</span>
              <span className="ml-[13px] pt-[2px] text-[13px] font-normal">x</span>
            </div>
            <div className="mt-[2px] flex h-[40px] w-[49px] items-center justify-center bg-[#117865]">
              <svg width="14" height="14" viewBox="0 0 14 14" stroke="#fff" strokeWidth="3.500"><path d="M7 0v14M0 7h14" /></svg>
            </div>
          </div>
        </div>

        {/* visualizations pane */}
        <aside className="flex w-[227px] flex-col border-x border-[#e1dfdd] text-[14.200px]">
          <div className="flex h-[50px] items-center justify-between pl-[10px] pr-[10px]">
            <h2 className="text-[18.600px] font-semibold">Visualizations</h2><DblChevron />
          </div>
          <div className="h-[22px] pl-[10px] text-[14.500px] font-medium leading-[16px]">Build visual</div>
          <div className="flex pl-[10px]">
            <div className="flex h-[40px] w-[40px] items-center justify-center rounded-[2px] bg-[#d2d0ce]">
              <svg width="30" height="30" viewBox="0 0 30 30" fill="#117865" stroke={K} strokeWidth="1.500"><path d="M0 1h24" /><path d="M.8 6.500h28.400v8.500H.8zM.8 20.500h28.400V29H.8z" strokeDasharray="2.500 2" /></svg>
            </div>
            <svg width="30" height="31" viewBox="0 0 30 31" fill="none" stroke={K} strokeWidth="1.500" className="ml-[48px] mt-[4px]"><path d="M6 30H1V1h13l8 9v2M14 1v9h7" /><path d="M29 11L18 22l3 3z" fill="#fff" /><path d="M18 22c-5 0-3 6-9 8 7 1 13 0 12-5z" /></svg>
          </div>
          <svg width="225" height="11" viewBox="0 0 225 11" fill="none" stroke="#8a8886" strokeWidth="1.300" className="mt-[5px] shrink-0"><path d="M0 10h20.500L30 1l9.500 9H225" /></svg>
          <div className="grid h-[259px] shrink-0 grid-cols-[repeat(6,35px)] grid-rows-[repeat(7,35px)] border-b border-[#dddbd9] pl-[13.500px] pt-[13.500px]">
            {gallery.map((g, i) => <V key={i}>{g}</V>)}
          </div>
          <div className="h-[37px] pl-[15px] leading-[41px]">Values</div>
          <div className="ml-[5px] mr-[7px] flex h-[35px] shrink-0 items-center rounded-[2px] border border-dashed border-[#bebbb8] bg-white pl-[12px] text-[14.300px]">Add data fields here</div>
          <div className="mt-[13px] h-[22px] pl-[15px] text-[14.500px] font-medium leading-[22px] text-[#3b3a39]">Drill through</div>
          <div className="mt-[3px] flex h-[34px] items-center justify-between pl-[15px] pr-[27px]">
            Cross-report
            <span className="flex h-[20px] w-[40px] items-center rounded-full border border-[#797775] bg-white pl-[5px] text-[11px] text-[#605e5c]"><i className="mr-[3px] h-[10px] w-[10px] rounded-full bg-[#605e5c]" />Off</span>
          </div>
          <div className="flex h-[34px] items-center justify-between pl-[15px] pr-[27px]">
            Keep all filters
            <span className="flex h-[20px] w-[40px] items-center rounded-full bg-[#117865] pl-[6px] text-[11px] text-white">On<i className="ml-[3px] h-[10px] w-[10px] rounded-full bg-white" /></span>
          </div>
          <div className="ml-[5px] mr-[7px] mt-[6px] flex h-[33px] shrink-0 items-center whitespace-nowrap rounded-[2px] border border-dashed border-[#bebbb8] bg-white pl-[10px] text-[14.350px]">Add drill-through fields here</div>
        </aside>

        {/* data pane */}
        <aside className="flex w-[225px] flex-col text-[14px] text-[#3b3a39]">
          <div className="flex h-[50px] items-center justify-between pl-[10px] pr-[10px] text-[#252423]">
            <h2 className="text-[18.600px] font-semibold">Data</h2><DblChevron />
          </div>
          <div className="ml-[5px] mt-[7px] flex h-[33px] w-[215px] items-center rounded-[2px] border border-[#8a8886] bg-white pl-[9px] text-[16.400px]">
            <Mag s={19} /><span className="ml-[7px] pt-[2px]">Search</span>
          </div>
          <div className="pt-[11px]">
            <TableRow n="Avg Shipping days per ..." />
            <TableRow n="emp" open />
            {fields.map((f) => (
              <div key={f.n} className="flex h-[30px] items-center whitespace-nowrap">
                <div className="flex w-[48px] pl-[30px]">{f.k === "date" && <RightCh />}</div>
                <div className="h-[15px] w-[15px] rounded-[2px] border border-[#797775] bg-[#f8f7f7]" />
                <div className="flex w-[32px] justify-center">
                  {f.k === "date" && (
                    <svg width="20" height="19" viewBox="0 0 20 19" fill="none" stroke={K} strokeWidth="1.300" className="ml-[2px]"><path d="M.7 2h18.600v16H.7zM.7 6h18.600M4.500 0v4M15.500 0v4" /><path d="M4 9.500h13M4 12.500h13M4 15.500h13" strokeDasharray="1.500 2.500" /></svg>
                  )}
                  {f.k === "sum" && <svg width="13" height="18" viewBox="0 0 13 18" fill="none" stroke={K} strokeWidth="1.400" className="ml-px"><path d="M12.500 1H1l7 8-7 8h11.500" /></svg>}
                </div>
                {f.n}
              </div>
            ))}
            <TableRow n="Orders" /><TableRow n="People" /><TableRow n="Returns" />
          </div>
        </aside>
      </main>

      {/* status bar */}
      <div className="flex h-[29px] shrink-0 items-center border-t border-[#dddbd9] text-[14px] text-[#484644]">
        <span className="w-[1654px] pl-[6px]">Page 4 of 4</span>
        <svg width="156" height="16" viewBox="0 0 156 16" stroke="#605e5c" fill="none" className="shrink-0"><path d="M0 8.500h6" strokeWidth="2" /><path d="M11 8h125" strokeWidth="1.300" /><path d="M60.500 1.500v13" strokeWidth="5" /><path d="M74 4.500v7" strokeWidth="2" /><path d="M143 8.500h10M148 3.500v10" strokeWidth="2" /></svg>
        <span className="w-[66px] shrink-0 pl-[18px] text-[14.500px] tracking-[-0.300px] text-[#605e5c]">80%</span>
        <svg width="21" height="16" viewBox="0 0 21 16" fill="none" stroke="#6b7275" strokeWidth="1.500" className="mt-[2px]"><path d="M1 1h19v14H1z" /><path d="M4 6V4h3M14 4h3v2M17 10v2h-3M7 12H4v-2" /></svg>
      </div>

      {/* taskbar */}
      <footer className="flex h-[51px] shrink-0 border-t border-black bg-gradient-to-r from-[#d8d8d9] via-[#dfdde0] to-[#e7dadf] text-black">
        <div className="flex w-[61px] items-center pl-[20px]">
          <svg width="20" height="20" viewBox="0 0 20 20"><path d="M0 3l8.500-1.200v7.700H0zM9.500 1.600L20 0v9.500H9.500zM0 10.500h8.500v7.700L0 17zM9.500 10.500H20V20L9.500 18.400z" /></svg>
        </div>
        <div className="flex w-[358px] items-center border-y border-[#c9c9c9] bg-white pl-[14px] text-[17.800px] text-[#222]">
          <Mag s={20} c="#111" />
          <span className="ml-[15px] w-[211px] whitespace-nowrap">Type here to search</span>
          <svg width="98" height="48" viewBox="0 0 98 48" className="shrink-0">
            <defs><radialGradient id="egg" cx=".4" cy=".3"><stop offset="0" stopColor="#ff9478" /><stop offset="1" stopColor="#d01e42" /></radialGradient>
              <linearGradient id="trk" x1="0" y1="0" x2="0" y2="1"><stop offset="0" stopColor="#e0a070" /><stop offset="1" stopColor="#c8531a" /></linearGradient>
              <linearGradient id="grs" x1="0" y1="0" x2="0" y2="1"><stop offset="0" stopColor="#9bc53d" /><stop offset="1" stopColor="#2f8a12" /></linearGradient></defs>
            <path d="M40 26q30-4 58-2v24H40z" fill="url(#grs)" />
            <path d="M0 48l14-10q14-13 30-14 12 0 10 5-2 6 8 19z" fill="url(#trk)" />
            <path d="M9 48q12-18 34-22M24 48q5-14 22-21M44 48q-2-12 5-20" stroke="#f3d9c5" fill="none" />
            <path d="M52 31c12-2 22 0 30-3-4 6-18 4-16 8 3 4 12 1 20 6" stroke="#f1dfb4" strokeWidth="2.500" fill="none" />
            <path d="M0 8q30 0 52-8" stroke="#666" fill="none" />
            <path d="M4 8l10-1 3 13-10 3z" fill="#f0672e" /><path d="M17 6l10-1 3 13-9 2z" fill="#f8b416" /><path d="M31 4l8-1 3 12-8 3z" fill="#9ccb2e" /><path d="M42 2l7-2 3 10-8 4z" fill="#22a4de" />
            <ellipse cx="80" cy="21" rx="8.500" ry="9" fill="url(#egg)" />
            <g fill="#fff" fontSize="11" fontWeight="700" fontFamily="Open Sans"><text x="11" y="46">1</text><text x="27" y="46">2</text><text x="43" y="46">3</text></g>
          </svg>
        </div>
        <div className="flex w-[65px] items-center pl-[21px]">
          <svg width="20" height="20" viewBox="0 0 20 20" fill="none" stroke="#111" strokeWidth="1.400"><path d="M1 0v3h11V0M1 6h11v8H1zM1 20v-3h11v3M18 0v5M18 11v9" /><path d="M16.500 7h3v3h-3z" fill="#111" stroke="none" /></svg>
        </div>
        <Task w="w-[59px]">{Edge}</Task>
        <Task w="w-[8px]" />
        <Task w="w-[51px]" line><div className="-ml-[3px]">{Folder}</div></Task>
        <Task w="w-[5px]" />
        <Task w="w-[61px]">{Store}</Task>
        <Task w="w-[64px]">{Mail}</Task>
        <Task w="w-[60px]">{LApp}</Task>
        <Task w="w-[61px]">{M365}</Task>
        <Task w="ml-[3px] w-[61px]" on line><div className="-ml-px">{PBI}</div></Task>
        <Task w="ml-[6px] w-[51px]" line><div className="-ml-px">{Chrome}</div></Task>
        <div className="w-[347px]" />
        <div className="flex flex-1 items-center text-[16.900px]">
          <svg width="28" height="26" viewBox="0 0 28 26" className="shrink-0"><defs><linearGradient id="sun" x1="0" y1="0" x2="0" y2="1"><stop offset="0" stopColor="#f3bb2c" /><stop offset="1" stopColor="#f26a0c" /></linearGradient></defs><circle cx="13" cy="13" r="12.800" fill="url(#sun)" /><path d="M13 21c-4-1-3-6 1-6 2-6 9-5 10 0 5 0 5 6 0 6z" fill="#a9c6f5" /></svg>
          <span className="ml-[10px] w-[48px] text-[16.500px]">30°C</span>
          <span className="w-[136px] whitespace-nowrap">Mostly sunny</span>
          <svg width="16" height="10" viewBox="0 0 16 10" fill="none" stroke="#111" strokeWidth="1.400" className="shrink-0"><path d="M1 9l7-8 7 8" /></svg>
          <svg width="15" height="18" viewBox="0 0 15 18" fill="none" stroke="#111" strokeWidth="1.300" className="ml-[15px] shrink-0"><path d="M1 4.500h9v9H1zM10 8l4-2.500v7L10 10M2 2q4-2 8 0M2 16q4 2 8 0" /></svg>
          <svg width="20" height="14" viewBox="0 0 20 14" className="ml-[12px] shrink-0"><path d="M4 13C-1 13-1 6 4 6c1-6 9-7 11-1 6 0 6 8 1 8z" fill="#777" stroke="#222" /><path d="M4 13l7-5 7 2q0 3-3 3z" fill="#e8e8e8" /></svg>
          <svg width="20" height="14" viewBox="0 0 20 14" className="ml-[10px] shrink-0"><path d="M5 3h13v2h2v6h-2v2H3V7h2z" /><path d="M0 2h5v3H3v4H2V5H0zM1 0v2M4 0v2" stroke="#111" /><path d="M5.500 4.500h11v7h-11z" stroke="#dedce0" fill="none" strokeWidth=".7" /></svg>
          <svg width="17" height="17" viewBox="0 0 17 17" fill="none" stroke="#111" strokeWidth="1.300" className="ml-[12px] shrink-0"><path d="M1 16A15 15 0 0 1 16 1M5 16A11 11 0 0 1 16 5M9 16a7 7 0 0 1 7-7" /><circle cx="14.500" cy="14.500" r="1.600" fill="#111" stroke="none" /></svg>
          <svg width="22" height="18" viewBox="0 0 22 18" fill="none" stroke="#111" strokeWidth="1.300" className="ml-[10px] shrink-0"><path d="M1 6h3l4-4v14l-4-4H1zM11 6.500q2 2.500 0 5M14 4q4 5 0 10M17 1.500q6 7.500 0 15" /></svg>
          <span className="ml-[12px] w-[32px] text-[14.300px]">ENG</span>
          <span className="ml-[11px] flex w-[80px] flex-col whitespace-nowrap text-center text-[14.300px] leading-[23px]"><span>11:03</span><span>29-08-2023</span></span>
          <svg width="21" height="20" viewBox="0 0 21 20" fill="none" stroke="#111" strokeWidth="1.400" className="ml-[21px] shrink-0"><path d="M1 1h19v15h-7l-2.500 3L8 16H1z" /></svg>
          <i className="ml-[24px] h-full w-px bg-[#a9a2a6]" />
        </div>
      </footer>
    </div>
  );
}
